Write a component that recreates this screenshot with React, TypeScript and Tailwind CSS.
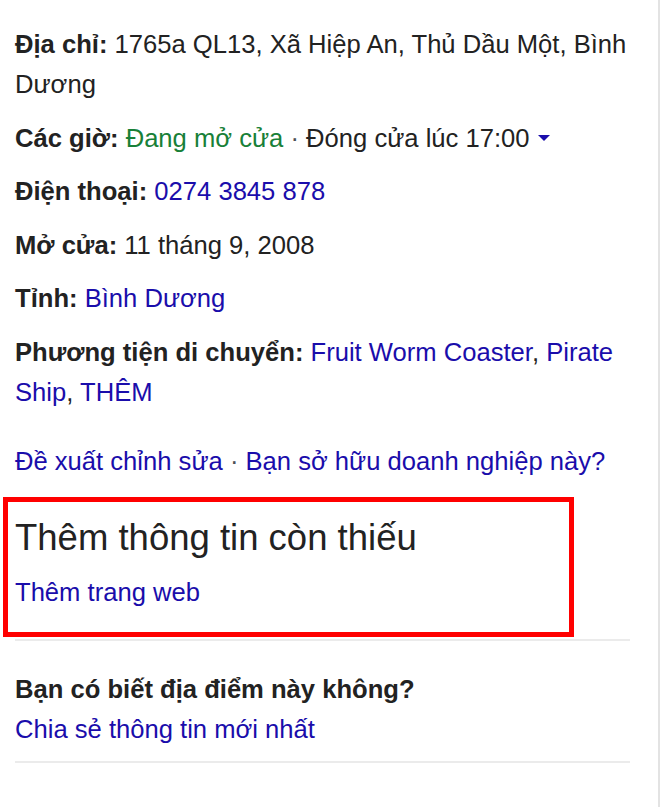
import React from "react";

function Row({ label, children }: { label: string; children: React.ReactNode }) {
  return (
    <div>
      <span className="font-bold">{label}</span> {children}
    </div>
  );
}

export default function App() {
  return (
    <div className="w-[660px] min-h-[807px] bg-white border-r-2 border-[#e3e3e3] font-['Liberation_Sans',Arial,sans-serif] text-[#222] text-[25.6px] leading-[40px]">
      <div className="pl-[15px] pr-[30px] pt-[24px] flex flex-col gap-[13.5px]">
        <Row label="Địa chỉ:">1765a QL13, Xã Hiệp An, Thủ Dầu Một, Bình Dương</Row>
        <Row label="Các giờ:">
          <span className="text-[#188038]">Đang mở cửa</span>
          <span className="text-[#4d5156]"> · </span>
          Đóng cửa lúc 17:00
          <span className="inline-block align-middle ml-[8px] mb-[4px] w-0 h-0 border-l-[6px] border-r-[6px] border-t-[6px] border-l-transparent border-r-transparent border-t-[#1a0dab]" />
        </Row>
        <Row label="Điện thoại:">
          <span className="text-[#1a0dab]">0274 3845 878</span>
        </Row>
        <Row label="Mở cửa:">11 tháng 9, 2008</Row>
        <Row label="Tỉnh:">
          <span className="text-[#1a0dab]">Bình Dương</span>
        </Row>
        <Row label="Phương tiện di chuyển:">
          <span className="text-[#1a0dab]">Fruit Worm Coaster</span>,{" "}
          <span className="text-[#1a0dab]">Pirate Ship</span>,{" "}
          <span className="text-[#1a0dab]">THÊM</span>
        </Row>
      </div>

      <div className="pl-[15px] mt-[29px] text-[#1a0dab]">
        Đề xuất chỉnh sửa <span className="text-[#4d5156]">·</span> Bạn sở hữu doanh nghiệp này?
      </div>

      <div className="ml-[3px] mt-[16px] w-[571px] border-[5px] border-[#ff0000] pl-[7px] pt-[12.5px] pb-[20px]">
        <div className="text-[36.5px] leading-[48px]">Thêm thông tin còn thiếu</div>
        <div className="mt-[10px] text-[#1a0dab]">Thêm trang web</div>
      </div>

      <div className="ml-[15px] mt-[2px] w-[615px] h-[2px] bg-[#ebebeb]" />

      <div className="pl-[15px] pt-[27.5px]">
        <div className="font-bold">Bạn có biết địa điểm này không?</div>
        <div className="text-[#1a0dab]">Chia sẻ thông tin mới nhất</div>
      </div>

      <div className="ml-[15px] mt-[12.5px] w-[615px] h-[2px] bg-[#ebebeb]" />
    </div>
  );
}
